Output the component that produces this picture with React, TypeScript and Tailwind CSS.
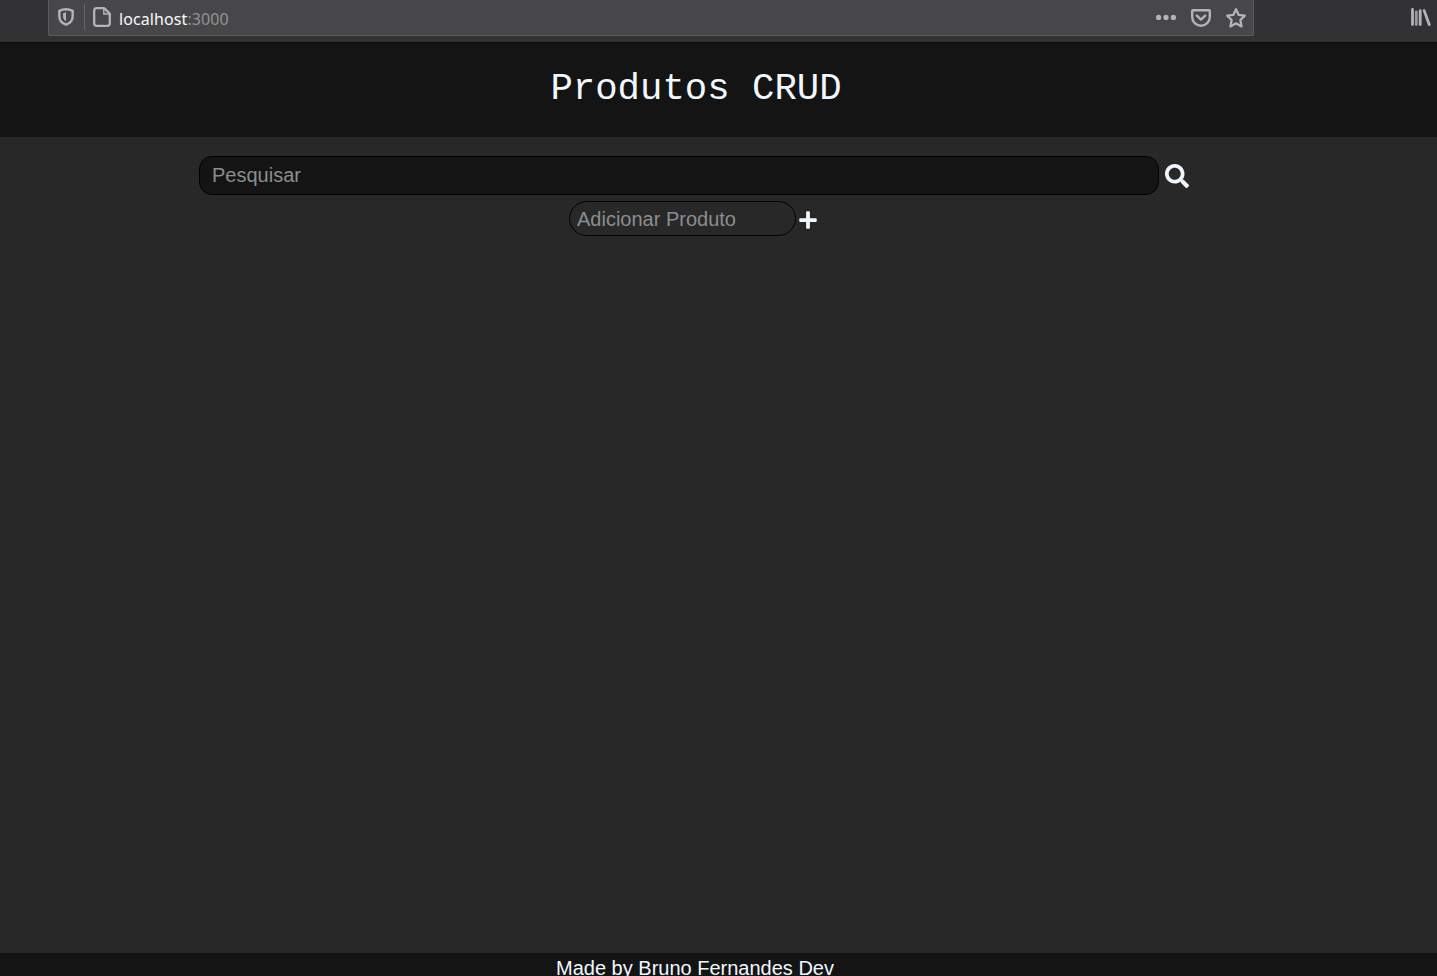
import { FaPlus, FaSearch } from "react-icons/fa";

function ShieldIcon() {
  return (
    <svg width="16" height="18" viewBox="0 0 16 18" fill="none">
      <path d="M8 1.3C10.2 1.3 12.6 1.8 14.7 2.8V8C14.7 12.4 12 15.4 8 16.7C4 15.4 1.3 12.4 1.3 8V2.8C3.4 1.8 5.8 1.3 8 1.3Z" stroke="#b1b5ba" strokeWidth="2.4" strokeLinejoin="round" />
      <path d="M8 4.6V13.2C5.8 12 5.1 10.3 5.1 8V5.2C6 4.8 7 4.6 8 4.6Z" fill="#b1b5ba" />
    </svg>
  );
}

function PageIcon() {
  return (
    <svg width="18" height="20" viewBox="0 0 18 20" fill="none" stroke="#b1b5ba" strokeWidth="2.3">
      <path d="M3.6 1.2H11.3L16.8 6.6V16.3Q16.8 18.8 14.3 18.8H3.7Q1.2 18.8 1.2 16.3V3.7Q1.2 1.2 3.6 1.2Z" strokeLinejoin="round" />
      <path d="M10.8 1.5V7H16.5" strokeWidth="1.5" />
    </svg>
  );
}

function PocketIcon() {
  return (
    <svg width="20" height="18" viewBox="0 0 20 18" fill="none" stroke="#b1b5ba" strokeWidth="2.4" strokeLinecap="round" strokeLinejoin="round">
      <path d="M2 1.2H18Q18.8 1.2 18.8 2V8A8.8 8.8 0 0 1 1.2 8V2Q1.2 1.2 2 1.2Z" />
      <path d="M5.8 6.6L10 10.6L14.2 6.6" />
    </svg>
  );
}

function StarIcon() {
  return (
    <svg width="20" height="20" viewBox="0 0 20 20" fill="none" stroke="#b1b5ba" strokeWidth="2.3" strokeLinejoin="round">
      <path d="M10 1.3L12.7 6.9L18.8 7.7L14.4 12L15.5 18.4L10 15.3L4.5 18.4L5.6 12L1.2 7.7L7.3 6.9Z" />
    </svg>
  );
}

function LibraryIcon() {
  return (
    <svg width="20" height="18" viewBox="0 0 20 18" fill="none" strokeLinecap="round">
      <path d="M1.5 1.5V16.5M9.2 2.6V16.5M13.2 2.6L18.2 16.5" stroke="#b1b5ba" strokeWidth="2.8" />
      <path d="M5.3 4V16.5" stroke="#989c9f" strokeWidth="2.8" />
    </svg>
  );
}

function BrowserBar() {
  return (
    <div className="flex h-[42px] shrink-0 items-start bg-[#323234] pl-12">
      <div className="flex h-9 w-[1206px] items-start rounded-b-[2px] border border-t-0 border-[#5b5b5d] bg-[#474749] pl-[9px] pr-[7px]">
        <div className="mt-2"><ShieldIcon /></div>
        <div className="ml-[10px] mt-1 h-[26px] w-px bg-[#66666a]" />
        <div className="ml-2 mt-[7px]"><PageIcon /></div>
        <span className="ml-2 mt-[7px] font-['Noto_Sans',sans-serif] text-[16px] leading-6 tracking-[0.09px] text-[#f9f9fa]">
          localhost<span className="text-[#929295]">:3000</span>
        </span>
        <div className="ml-auto flex items-start">
          <svg className="mt-[14px]" width="20" height="6" viewBox="0 0 20 6" fill="#b1b5ba">
            <circle cx="2.6" cy="3.4" r="2.6" />
            <circle cx="10" cy="3.4" r="2.6" />
            <circle cx="17.4" cy="3.4" r="2.6" />
          </svg>
          <div className="ml-[15px] mt-[9px]"><PocketIcon /></div>
          <div className="ml-[15px] mt-2"><StarIcon /></div>
        </div>
      </div>
      <div className="ml-auto mr-[6px] mt-2"><LibraryIcon /></div>
    </div>
  );
}

export default function App() {
  return (
    <div className="flex h-[976px] w-full flex-col overflow-hidden bg-[#282828] font-['Liberation_Sans',Arial,sans-serif] text-xl text-[#f0f8ff]">
      <BrowserBar />
      <header className="flex h-[95px] shrink-0 justify-center border-t border-[#0c0c0d] bg-[#141414] pr-[45px] pt-[25px]">
        <h1 className="font-['Liberation_Mono','Courier_New',monospace] text-[37.333px] leading-[42px]">Produtos CRUD</h1>
      </header>
      <main className="flex flex-1 flex-col pt-[19px]">
        <div className="flex items-start pl-[199px]">
          <input
            placeholder="Pesquisar"
            className="h-[39px] w-[960px] rounded-[13px] border border-black bg-[#141414] px-3 leading-6 outline-none placeholder:text-[#8a8e91]"
          />
          <button className="ml-[6px] mt-2" aria-label="Pesquisar"><FaSearch size={24} /></button>
        </div>
        <div className="mt-[6px] flex items-start pl-[569px]">
          <input
            placeholder="Adicionar Produto"
            className="h-[35px] w-[227px] rounded-[18px] border border-black bg-transparent px-[7px] pt-[2px] leading-6 outline-none placeholder:text-[#8a8e91]"
          />
          <button className="ml-[2px] mt-[9px]" aria-label="Adicionar"><FaPlus size={20} /></button>
        </div>
      </main>
      <footer className="flex h-[23px] shrink-0 justify-center bg-[#141414] pr-[47px] pt-[3px]">
        <p className="leading-6">Made by Bruno Fernandes Dev</p>
      </footer>
    </div>
  );
}
